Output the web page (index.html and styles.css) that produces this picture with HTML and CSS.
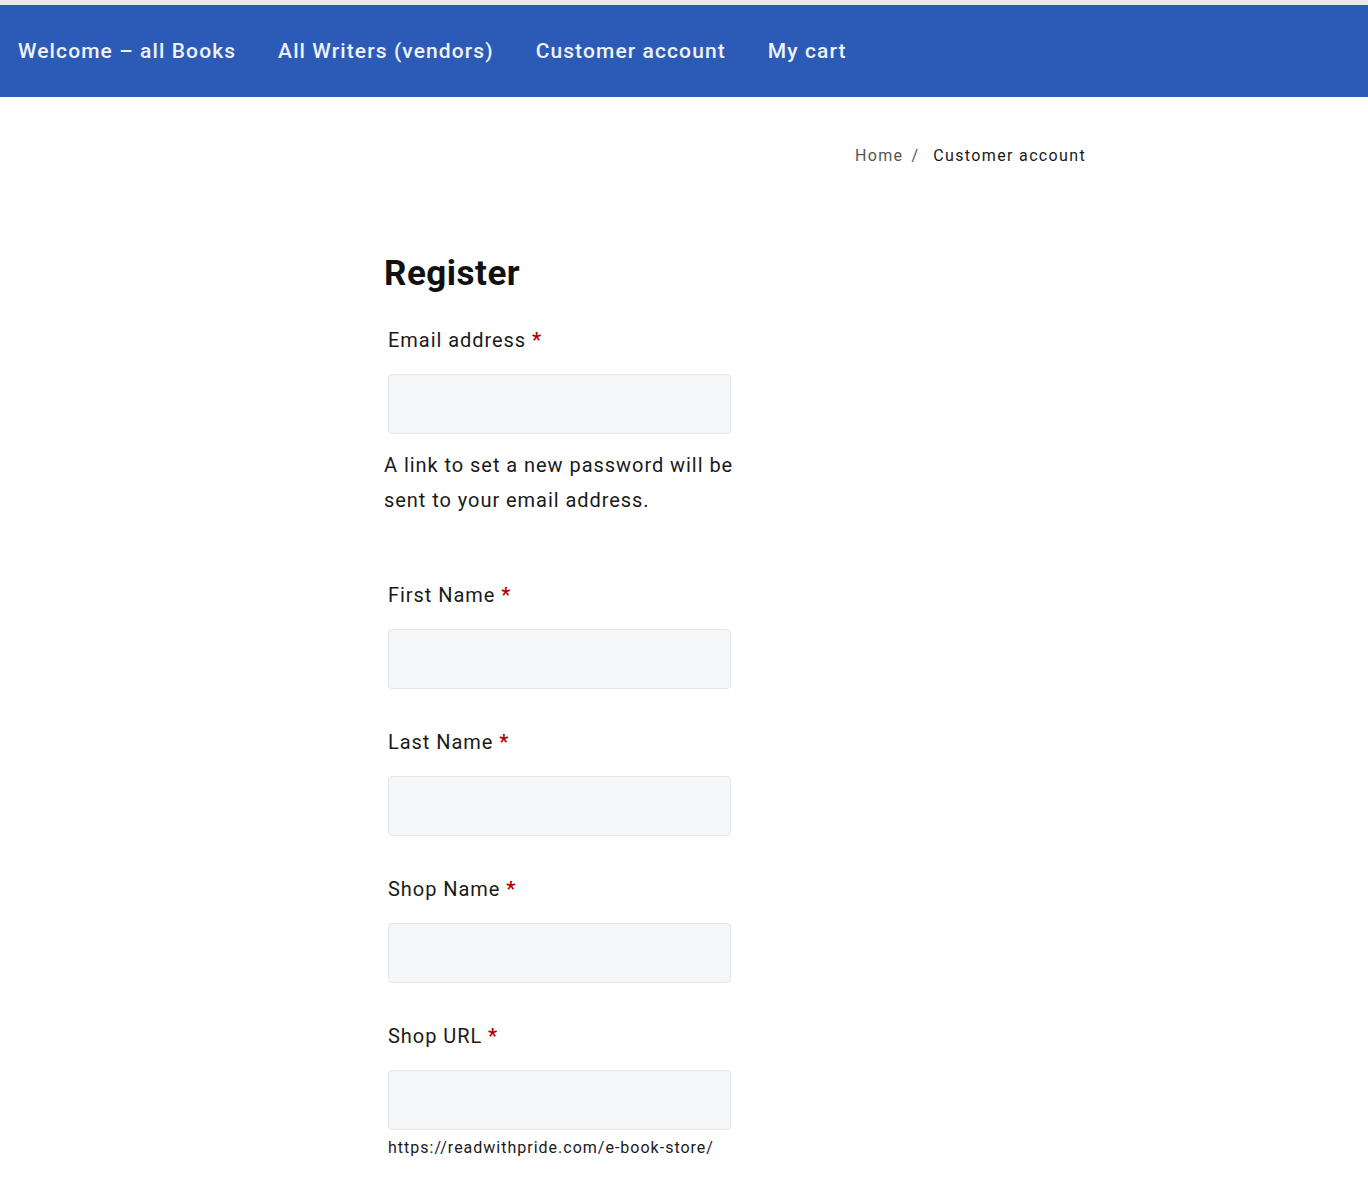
FILE: index.html
```html
<!DOCTYPE html>
<html>
  <head>
    <link rel="stylesheet" href="styles.css">
    <title>
      Customer account
    </title>
  </head>
  <body>
    <div class="top-strip"></div>
    <nav class="main-nav">
      <a class="nav-link" href="#">Welcome &ndash; all Books</a>
      <a class="nav-link" href="#">All Writers (vendors)</a>
      <a class="nav-link" href="#">Customer account</a>
      <a class="nav-link" href="#">My cart</a>
    </nav>

    <div class="page">
      <div class="breadcrumb">
        <a class="breadcrumb-home" href="#">Home</a>
        <span class="breadcrumb-sep">/</span>
        <span class="breadcrumb-current">Customer account</span>
      </div>

      <form class="register-form">
        <h2 class="register-heading">Register</h2>

        <div class="form-row">
          <label class="form-label">Email address <span class="required">*</span></label>
          <input class="form-input" type="email">
        </div>
        <p class="form-note">A link to set a new password will be sent to your email address.</p>

        <div class="form-row">
          <label class="form-label">First Name <span class="required">*</span></label>
          <input class="form-input" type="text">
        </div>

        <div class="form-row">
          <label class="form-label">Last Name <span class="required">*</span></label>
          <input class="form-input" type="text">
        </div>

        <div class="form-row">
          <label class="form-label">Shop Name <span class="required">*</span></label>
          <input class="form-input" type="text">
        </div>

        <div class="form-row">
          <label class="form-label">Shop URL <span class="required">*</span></label>
          <input class="form-input" type="text">
          <small class="url-hint">https://readwithpride.com/e-book-store/</small>
        </div>
      </form>
    </div>
  </body>
</html>
```

FILE: styles.css
```css
body {
  margin: 0;
  font-family: Roboto, "Liberation Sans", sans-serif;
  color: #1a1a1a;
  background-color: white;
}

.top-strip {
  height: 5px;
  background-color: #e8e8ec;
}

.main-nav {
  display: flex;
  align-items: center;
  gap: 42px;
  height: 92px;
  padding-left: 18px;
  background-color: #2c5bb7;
}

.nav-link {
  color: #eef2fb;
  text-decoration: none;
  font-size: 21px;
  font-weight: 500;
  letter-spacing: 1.1px;
}

.page {
  width: 702px;
  margin-left: 384px;
}

.breadcrumb {
  display: flex;
  justify-content: flex-end;
  align-items: center;
  margin-top: 47px;
  font-size: 16px;
  line-height: 24px;
  letter-spacing: 1.35px;
}

.breadcrumb-home {
  color: #555;
  text-decoration: none;
}

.breadcrumb-sep {
  color: #555;
  margin: 0 14px 0 8px;
}

.breadcrumb-current {
  color: #1a1a1a;
}

.register-form {
  width: 352px;
  margin-top: 85px;
}

.register-heading {
  margin: 0 0 29px;
  font-size: 35px;
  line-height: 42px;
  font-weight: 700;
  letter-spacing: 0.5px;
  color: #111;
}

.form-row {
  display: flex;
  flex-direction: column;
  padding-left: 4px;
  margin-bottom: 37px;
}

.form-label {
  font-size: 20px;
  line-height: 32px;
  letter-spacing: 0.95px;
  margin-bottom: 18px;
}

.required {
  color: #b30000;
  font-weight: 700;
}

.form-input {
  box-sizing: border-box;
  width: 343px;
  height: 60px;
  border: 1px solid #e4e6e9;
  border-radius: 4px;
  background-color: #f5f6f7;
}

.form-note {
  margin: -23px 0 61px;
  font-size: 20px;
  line-height: 35px;
  letter-spacing: 0.95px;
}

.url-hint {
  margin-top: 6px;
  font-size: 16px;
  line-height: 24px;
  letter-spacing: 1px;
}
```
